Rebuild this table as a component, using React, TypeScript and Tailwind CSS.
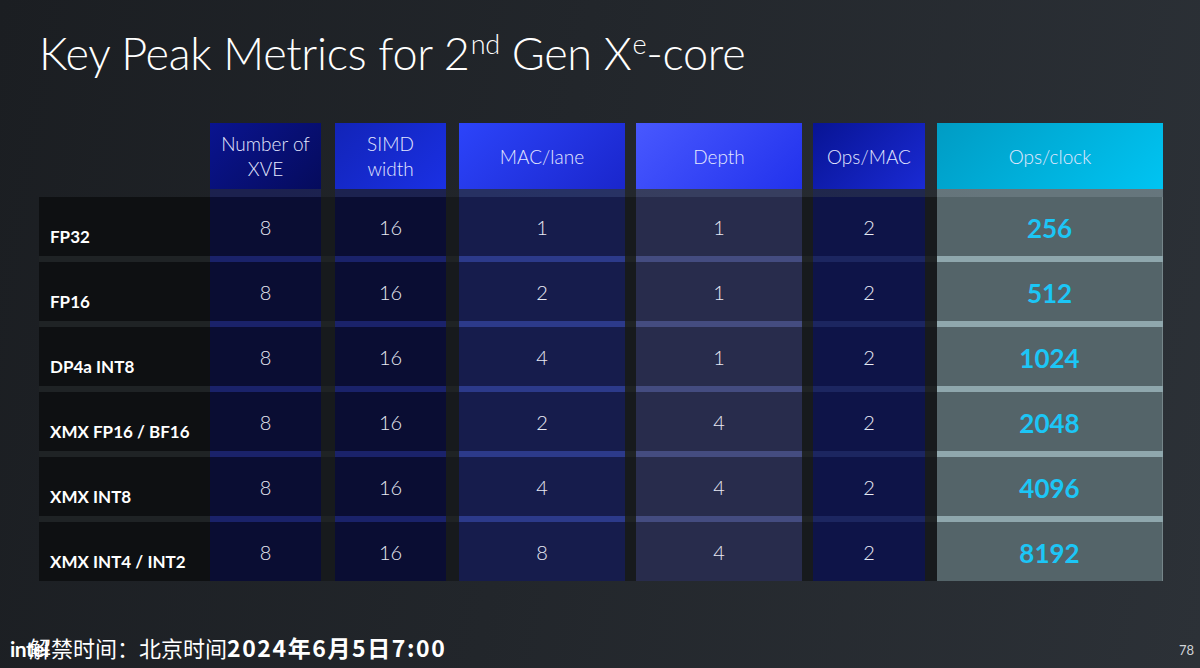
import React from "react";

type Col = {
  key: string;
  head: string[];
  width: string;
  gap: string;
  headBg: string;
  cellBg: string;
  stripBg: string;
};

const cols: Col[] = [
  { key: "xve", head: ["Number of", "XVE"], width: "w-[111px]", gap: "ml-0", headBg: "bg-[linear-gradient(135deg,#0a1490,#050b5c)]", cellBg: "bg-[#0a0d33]", stripBg: "bg-[#1a226a]" },
  { key: "simd", head: ["SIMD", "width"], width: "w-[111px]", gap: "ml-[14px]", headBg: "bg-[linear-gradient(135deg,#1224b8,#1a30e4)]", cellBg: "bg-[#0a0d33]", stripBg: "bg-[#1a226a]" },
  { key: "mac", head: ["MAC/lane"], width: "w-[166px]", gap: "ml-[13px]", headBg: "bg-[linear-gradient(135deg,#2c44fa,#1a26cc)]", cellBg: "bg-[#161c4c]", stripBg: "bg-[#2c3a8a]" },
  { key: "depth", head: ["Depth"], width: "w-[166px]", gap: "ml-[11px]", headBg: "bg-[linear-gradient(135deg,#4858ff,#2232ec)]", cellBg: "bg-[#282c4c]", stripBg: "bg-[#444c80]" },
  { key: "opsmac", head: ["Ops/MAC"], width: "w-[112px]", gap: "ml-[11px]", headBg: "bg-[linear-gradient(135deg,#081494,#1a2ad4)]", cellBg: "bg-[#0e1448]", stripBg: "bg-[#1c2660]" },
  { key: "opsclk", head: ["Ops/clock"], width: "w-[226px]", gap: "ml-[12px]", headBg: "bg-[linear-gradient(135deg,#009cc4,#00c4f2)]", cellBg: "bg-[#546469]", stripBg: "bg-[#8fa7ad]" },
];

const rows: { label: string; vals: number[] }[] = [
  { label: "FP32", vals: [8, 16, 1, 1, 2, 256] },
  { label: "FP16", vals: [8, 16, 2, 1, 2, 512] },
  { label: "DP4a INT8", vals: [8, 16, 4, 1, 2, 1024] },
  { label: "XMX FP16 / BF16", vals: [8, 16, 2, 4, 2, 2048] },
  { label: "XMX INT8", vals: [8, 16, 4, 4, 2, 4096] },
  { label: "XMX INT4 / INT2", vals: [8, 16, 8, 4, 2, 8192] },
];

const font = "font-['Lato','Noto_Sans',sans-serif]";

export default function App() {
  return (
    <div className={`relative w-[1200px] h-[668px] overflow-hidden bg-[linear-gradient(100deg,#1b1e22_0%,#22262b_45%,#2c3137_100%)] text-white ${font}`}>
      {/* Title */}
      <h1 className="pl-[39px] pt-[24px] text-[45px] leading-[58px] font-light tracking-[-0.3px] text-white">
        Key Peak Metrics for 2<sup className="text-[27px] relative -top-[16px] ml-[1px]">nd</sup> Gen X<sup className="text-[27px] relative -top-[16px] ml-[1px]">e</sup>-core
      </h1>

      {/* Table */}
      <div className="mt-[41px] ml-[39px] w-[1124px]">
        {/* Header */}
        <div className="flex h-[66px]">
          <div className="w-[171px]" />
          {cols.map((c) => (
            <div
              key={c.key}
              className={`${c.width} ${c.gap} ${c.headBg} flex flex-col items-center justify-center text-[19px] leading-[25px] font-light text-[#e4e8ff]`}
            >
              {c.head.map((h) => (
                <span key={h}>{h}</span>
              ))}
            </div>
          ))}
        </div>

        {/* Rows */}
        {rows.map((r, ri) => (
          <div key={r.label} className="flex flex-col">
            <div className={`flex ${ri === 0 ? "h-[8px]" : "h-[6px] bg-[#1f2325]"}`}>
              <div className="w-[171px]" />
              {cols.map((c) => (
                <div
                  key={c.key}
                  className={`${c.width} ${c.gap} ${c.stripBg} ${ri === 0 ? "opacity-60" : ""}`}
                />
              ))}
            </div>
            <div className="flex h-[59px] bg-[#171a1d]">
              <div className="w-[171px] bg-[#0e1012] flex items-end pl-[11px] pb-[7px] text-[17px] font-bold text-white">
                {r.label}
              </div>
              {cols.map((c, ci) => (
                <div
                  key={c.key}
                  className={`${c.width} ${c.gap} ${c.cellBg} flex items-center justify-center ${ci === 5 ? "border-r border-[#76868a]" : ""}`}
                >
                  {ci === 5 ? (
                    <span className="text-[26px] font-bold text-[#1cc6f6] mt-[3px]">{r.vals[ci]}</span>
                  ) : (
                    <span className="text-[20px] font-light text-[#e8eaf4] mt-[1px]">{r.vals[ci]}</span>
                  )}
                </div>
              ))}
            </div>
          </div>
        ))}
      </div>

      {/* Footer: watermark text lies over the logo, as in the slide */}
      <div className="absolute left-[10px] top-[633px] text-[21px] font-bold text-white tracking-[-0.5px]">
        intel
      </div>
      <div className="absolute left-[29px] top-[632px] text-[22px] leading-[30px] text-white font-['Noto_Sans_CJK_SC',sans-serif]">
        解禁时间：北京时间<span className="font-bold text-[23px] tracking-[1.6px]">2024年6月5日7:00</span>
      </div>
      <div className="absolute left-[1179px] top-[641px] text-[13px] text-[#d0d4d8]">78</div>
    </div>
  );
}
